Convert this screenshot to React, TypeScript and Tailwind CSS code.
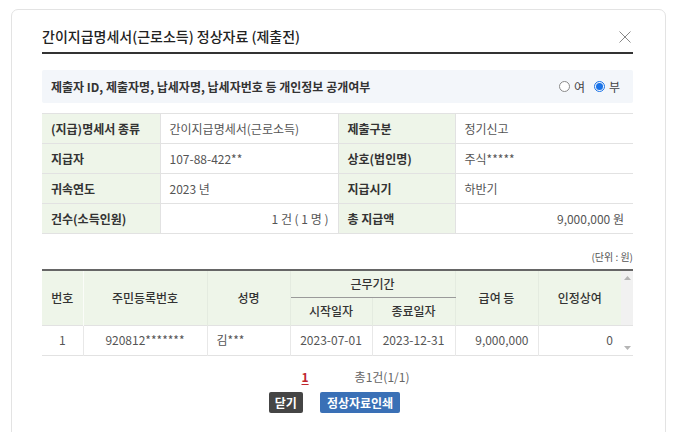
import React from 'react';

const font = { fontFamily: '"Noto Sans CJK KR", "Noto Sans", sans-serif' };

const labelCell = 'bg-[#eef5e9] px-[9px] text-[12px] font-semibold text-[#333] border-b border-[#e2e2e2]';
const valueCell = 'px-[9px] text-[12px] text-[#555] border-b border-[#e2e2e2] border-l border-r';

function Radio({ checked, label }: { checked?: boolean; label: string }) {
  return (
    <label className="flex items-center gap-[4px] text-[12px] text-[#444]">
      <span
        className={
          checked
            ? 'flex h-[11px] w-[11px] items-center justify-center rounded-full border border-[#1a73e8]'
            : 'h-[11px] w-[11px] rounded-full border border-[#8a8a8a] bg-white'
        }
      >
        {checked && <span className="h-[7px] w-[7px] rounded-full bg-[#1a73e8]" />}
      </span>
      {label}
    </label>
  );
}

export default function App() {
  return (
    <div className="h-[432px] w-[677px] overflow-hidden bg-white" style={font}>
      <div className="ml-[11px] mt-[9px] h-[440px] w-[655px] rounded-[7px] border border-[#e3e3e3] px-[30px] pr-[32px]">
        {/* header */}
        <div className="flex h-[44px] items-end justify-between border-b-2 border-[#333] pb-[6px]">
          <h1 className="text-[14px] font-medium leading-[20px] text-[#222]">
            간이지급명세서(근로소득) 정상자료 (제출전)
          </h1>
          <button className="mb-[3px] mr-[2px] text-[#888]">
            <svg width="12" height="12" viewBox="0 0 12 12" fill="none" stroke="currentColor" strokeWidth="1">
              <path d="M0.5 0.5L11.5 11.5M11.5 0.5L0.5 11.5" />
            </svg>
          </button>
        </div>

        {/* privacy */}
        <div className="mt-[16px] flex h-[33px] items-center justify-between rounded-[2px] bg-[#f3f6fa] pl-[9px] pr-[13px]">
          <span className="text-[12px] font-semibold text-[#333]">
            제출자 ID, 제출자명, 납세자명, 납세자번호 등 개인정보 공개여부
          </span>
          <div className="flex items-center gap-[9px]">
            <Radio label="여" />
            <Radio label="부" checked />
          </div>
        </div>

        {/* summary */}
        <table className="mt-[10px] w-full table-fixed border-collapse border-t border-[#e2e2e2]">
          <colgroup>
            <col className="w-[118px]" />
            <col className="w-[178px]" />
            <col className="w-[117px]" />
            <col />
          </colgroup>
          <tbody>
            <tr className="h-[30px]">
              <td className={labelCell}>(지급)명세서 종류</td>
              <td className={valueCell}>간이지급명세서(근로소득)</td>
              <td className={labelCell}>제출구분</td>
              <td className={valueCell + ' border-r-0'}>정기신고</td>
            </tr>
            <tr className="h-[30px]">
              <td className={labelCell}>지급자</td>
              <td className={valueCell + ' text-[11px]'}>107-88-422**</td>
              <td className={labelCell}>상호(법인명)</td>
              <td className={valueCell + ' border-r-0'}>주식*****</td>
            </tr>
            <tr className="h-[30px]">
              <td className={labelCell}>귀속연도</td>
              <td className={valueCell + ' text-[11px]'}>2023 년</td>
              <td className={labelCell}>지급시기</td>
              <td className={valueCell + ' border-r-0'}>하반기</td>
            </tr>
            <tr className="h-[30px]">
              <td className={labelCell}>건수(소득인원)</td>
              <td className={valueCell + ' text-right'}>1 건 ( 1 명 )</td>
              <td className={labelCell}>총 지급액</td>
              <td className={valueCell + ' border-r-0 text-right text-[11px]'}>9,000,000 원</td>
            </tr>
          </tbody>
        </table>

        <div className="mt-[16px] text-right text-[10px] leading-[14px] text-[#555]">(단위 : 원)</div>

        {/* detail */}
        <table className="mt-[5px] w-full table-fixed border-collapse border-t-2 border-[#666] text-[12px]">
          <colgroup>
            <col className="w-[41px]" />
            <col className="w-[124px]" />
            <col className="w-[83px]" />
            <col className="w-[82px]" />
            <col className="w-[83px]" />
            <col className="w-[83px]" />
            <col className="w-[83px]" />
            <col />
          </colgroup>
          <thead className="text-[#333]">
            <tr className="h-[27px] bg-[#eef5e9]">
              <th rowSpan={2} className="border-r border-[#fafcf8] font-medium">번호</th>
              <th rowSpan={2} className="border-r border-[#e4ebe0] font-medium">주민등록번호</th>
              <th rowSpan={2} className="border-r border-[#e4ebe0] font-medium">성명</th>
              <th colSpan={2} className="border-b border-r border-[#9a9a9a] border-r-[#e4ebe0] font-medium">근무기간</th>
              <th rowSpan={2} className="border-r border-[#e4ebe0] font-medium">급여 등</th>
              <th rowSpan={2} className="font-medium">인정상여</th>
              <th rowSpan={2} className="bg-[#f1f1f1] align-top">
                <svg className="ml-[3px] mt-[5px]" width="7" height="4" viewBox="0 0 7 4">
                  <path d="M3.5 0L7 4H0Z" fill="#b5b5b5" />
                </svg>
              </th>
            </tr>
            <tr className="h-[28px] bg-[#eef5e9]">
              <th className="border-r border-[#e4ebe0] font-medium">시작일자</th>
              <th className="border-r border-[#e4ebe0] font-medium">종료일자</th>
            </tr>
          </thead>
          <tbody className="text-[#555]">
            <tr className="h-[30px] border-b border-t border-[#e2e2e2]">
              <td className="border-r border-[#e8e8e8] text-center">1</td>
              <td className="border-r border-[#e8e8e8] text-center">920812*******</td>
              <td className="border-r border-[#e8e8e8] pl-[9px]">김***</td>
              <td className="border-r border-[#e8e8e8] text-center">2023-07-01</td>
              <td className="border-r border-[#e8e8e8] text-center">2023-12-31</td>
              <td className="border-r border-[#e8e8e8] pr-[9px] text-right">9,000,000</td>
              <td className="pr-[8px] text-right">0</td>
              <td className="align-bottom">
                <svg className="mb-[5px] ml-[3px]" width="7" height="4" viewBox="0 0 7 4">
                  <path d="M0 0H7L3.5 4Z" fill="#b5b5b5" />
                </svg>
              </td>
            </tr>
          </tbody>
        </table>

        {/* paging */}
        <div className="mt-[12px] flex h-[18px] items-center justify-center gap-[46px] pl-[36px] text-[12px]">
          <a className="font-semibold text-[#c0262d] underline underline-offset-2">1</a>
          <span className="text-[#666]">총1건(1/1)</span>
        </div>

        <div className="mt-[6px] flex justify-center gap-[17px] pr-[6px]">
          <button className="h-[21px] rounded-[2px] bg-[#454545] px-[6px] text-[12px] font-bold leading-[21px] text-white">
            닫기
          </button>
          <button className="h-[21px] rounded-[2px] bg-[#3a70b6] px-[7px] text-[12px] font-bold leading-[21px] text-white">
            정상자료인쇄
          </button>
        </div>
      </div>
    </div>
  );
}
